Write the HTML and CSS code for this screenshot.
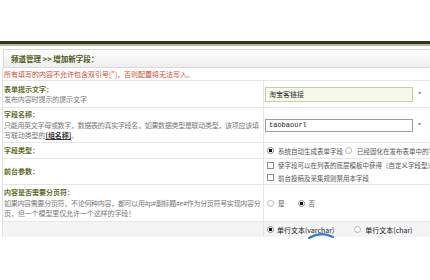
FILE: index.html
```html
<!DOCTYPE html>
<html lang="zh-CN">
<head>
<meta charset="utf-8">
<title>增加新字段</title>
<link rel="stylesheet" href="styles.css">
</head>
<body>
<div class="page">
  <div class="top-space"></div>
  <div class="rule-dark"></div>
  <div class="rule-light"></div>
  <div class="crumb">频道管理 &gt;&gt; 增加新字段：</div>
  <div class="form">
    <div class="notice">所有填写的内容不允许包含双引号["]，否则配置将无法写入。</div>

    <div class="row row-1">
      <div class="cell-label">
        <span class="lbl">表单提示文字：</span>
        <span class="desc">发布内容时提示的提示文字</span>
      </div>
      <div class="cell-field">
        <div class="line"><input class="text text-green" value="淘宝客链接"><span class="req">*</span></div>
      </div>
    </div>

    <div class="row row-2">
      <div class="cell-label">
        <span class="lbl">字段名称：</span>
        <span class="desc desc-long">只能用英文字母或数字，数据表的真实字段名，如果数据类型是联动类型，该项应该填</span>
        <span class="desc">写联动类型的<a class="link">[组名称]</a>。</span>
      </div>
      <div class="cell-field">
        <div class="line"><input class="text text-plain" value="taobaourl"><span class="req">*</span></div>
      </div>
    </div>

    <div class="row row-3">
      <div class="cell-label">
        <span class="lbl">字段类型：</span>
      </div>
      <div class="cell-field pad">
        <div class="line">
          <label class="opt"><input type="radio" name="ft" checked>系统自动生成表单字段</label>
          <label class="opt opt-tight"><input type="radio" name="ft">已经固化在发布表单中的字段</label>
        </div>
      </div>
    </div>

    <div class="row row-4">
      <div class="cell-label">
        <span class="lbl">前台参数：</span>
      </div>
      <div class="cell-field pad">
        <div class="line line-check"><label class="opt"><input type="checkbox">使字段可以在列表的底层模板中获得（自定义字段型）</label></div>
        <div class="line line-check"><label class="opt"><input type="checkbox">前台投稿及采集规则禁用本字段</label></div>
      </div>
    </div>

    <div class="row row-5">
      <div class="cell-label">
        <span class="lbl">内容是否需要分页符：</span>
        <span class="desc desc-long">如果内容需要分页符，不论何种内容，都可以用#p#副标题#e#作为分页符号实现内容分</span>
        <span class="desc">页，但一个模型里仅允许一个这样的字段！</span>
      </div>
      <div class="cell-field pad">
        <div class="line">
          <label class="opt opt-yn"><input type="radio" name="pg">是</label>
          <label class="opt opt-yn"><input type="radio" name="pg" checked>否</label>
        </div>
      </div>
    </div>

    <div class="row row-6">
      <div class="cell-label"></div>
      <div class="cell-field pad">
        <div class="line line-dark">
          <label class="opt opt-type"><input type="radio" name="dt" checked>单行文本(varchar)</label>
          <label class="opt"><input type="radio" name="dt">单行文本(char)</label>
        </div>
        <svg class="swoosh" width="26" height="6" viewBox="0 0 26 6"><path d="M1 5 Q13 -2 25 4" fill="none" stroke="#2f7fd0" stroke-width="2.2" stroke-linecap="round"/></svg>
      </div>
    </div>
  </div>
</div>
</body>
</html>
```

FILE: styles.css
```css
* { box-sizing: border-box; }

body {
  margin: 0;
  width: 430px;
  height: 280px;
  overflow: hidden;
  background: #fff;
  font-family: "Noto Sans CJK SC", "Noto Sans", sans-serif;
  font-size: 7px;
  color: #666;
}

.page { width: 480px; }

.top-space { height: 41px; }
.rule-dark { height: 3px; background: #2e3322; }
.rule-light { height: 2px; background: #b2bf93; }

.crumb {
  margin: 3px 0 0 3px;
  height: 19px;
  border: 1px solid #dadada;
  background: linear-gradient(#fefefe, #eeeeee);
  padding-left: 7px;
  display: flex;
  align-items: center;
  font-weight: bold;
  font-size: 7.5px;
  color: #4b5720;
}

.form {
  margin-left: 2px;
  border-left: 1px solid #e2e2e2;
}

.notice {
  height: 13px;
  line-height: 12px;
  padding-left: 1px;
  color: #d1491f;
  border-bottom: 1px solid #e6e6e6;
  white-space: nowrap;
}

.row {
  display: flex;
  border-bottom: 1px solid #e6e6e6;
}
.row-1 { height: 27px; }
.row-2 { height: 35px; }
.row-3 { height: 16px; }
.row-4 { height: 26px; }
.row-5 { height: 37px; }
.row-6 { height: 15px; border-bottom: none; background: #f4f4f4; }

.cell-label {
  width: 261px;
  flex: none;
  border-right: 1px solid #e6e6e6;
  padding: 0 0 0 1px;
  display: flex;
  flex-direction: column;
  justify-content: center;
  line-height: 10.5px;
  white-space: nowrap;
  overflow: hidden;
}

.lbl { font-weight: bold; color: #5d6a22; }
.desc { color: #777; letter-spacing: -0.1px; }
.desc-long { letter-spacing: -0.3px; }
.link { color: #333; font-weight: bold; text-decoration: underline; }

.cell-field {
  flex: 1;
  display: flex;
  flex-direction: column;
  justify-content: center;
  padding-left: 1px;
  position: relative;
  white-space: nowrap;
  font-size: 6.5px;
  color: #555;
}
.cell-field.pad { padding-left: 3px; }

.line { display: flex; align-items: center; }
.line-check { height: 13px; }
.line-dark { color: #222; font-size: 7px; }

.text {
  width: 148px;
  height: 15px;
  margin: 0;
  padding: 0 0 0 3px;
  border: 1px solid #c5cfa4;
  background: #f6faea;
  font: 7px "Noto Sans CJK SC", sans-serif;
  color: #333;
  outline: none;
}
.text-plain {
  height: 13px;
  border-color: #9c9c9c;
  background: #fff;
  font-family: "Liberation Mono", monospace;
  font-size: 7px;
  color: #222;
}

.req { margin-left: 5px; color: #333; font-size: 7px; }

.opt {
  display: inline-flex;
  align-items: center;
  gap: 4px;
}
.opt-tight { margin-left: 2px; gap: 5px; }
.opt-yn { margin-right: 13px; gap: 4px; }
.opt-type { margin-right: 20px; gap: 3px; }

.opt input {
  -webkit-appearance: none;
  appearance: none;
  margin: 0;
  width: 7px;
  height: 7px;
  border: 1px solid #a4a4a4;
  background: #fff;
  flex: none;
}
.opt input[type="radio"] { border-radius: 50%; border-color: #b4b4b4; }
.opt input[type="radio"]:checked {
  border-color: #8a8a8a;
  background: radial-gradient(circle, #111 0, #111 1.4px, #fff 1.9px);
}
.opt input[type="checkbox"] { border-color: #8e8e8e; }

.swoosh {
  position: absolute;
  left: 44px;
  top: 11px;
}
```
